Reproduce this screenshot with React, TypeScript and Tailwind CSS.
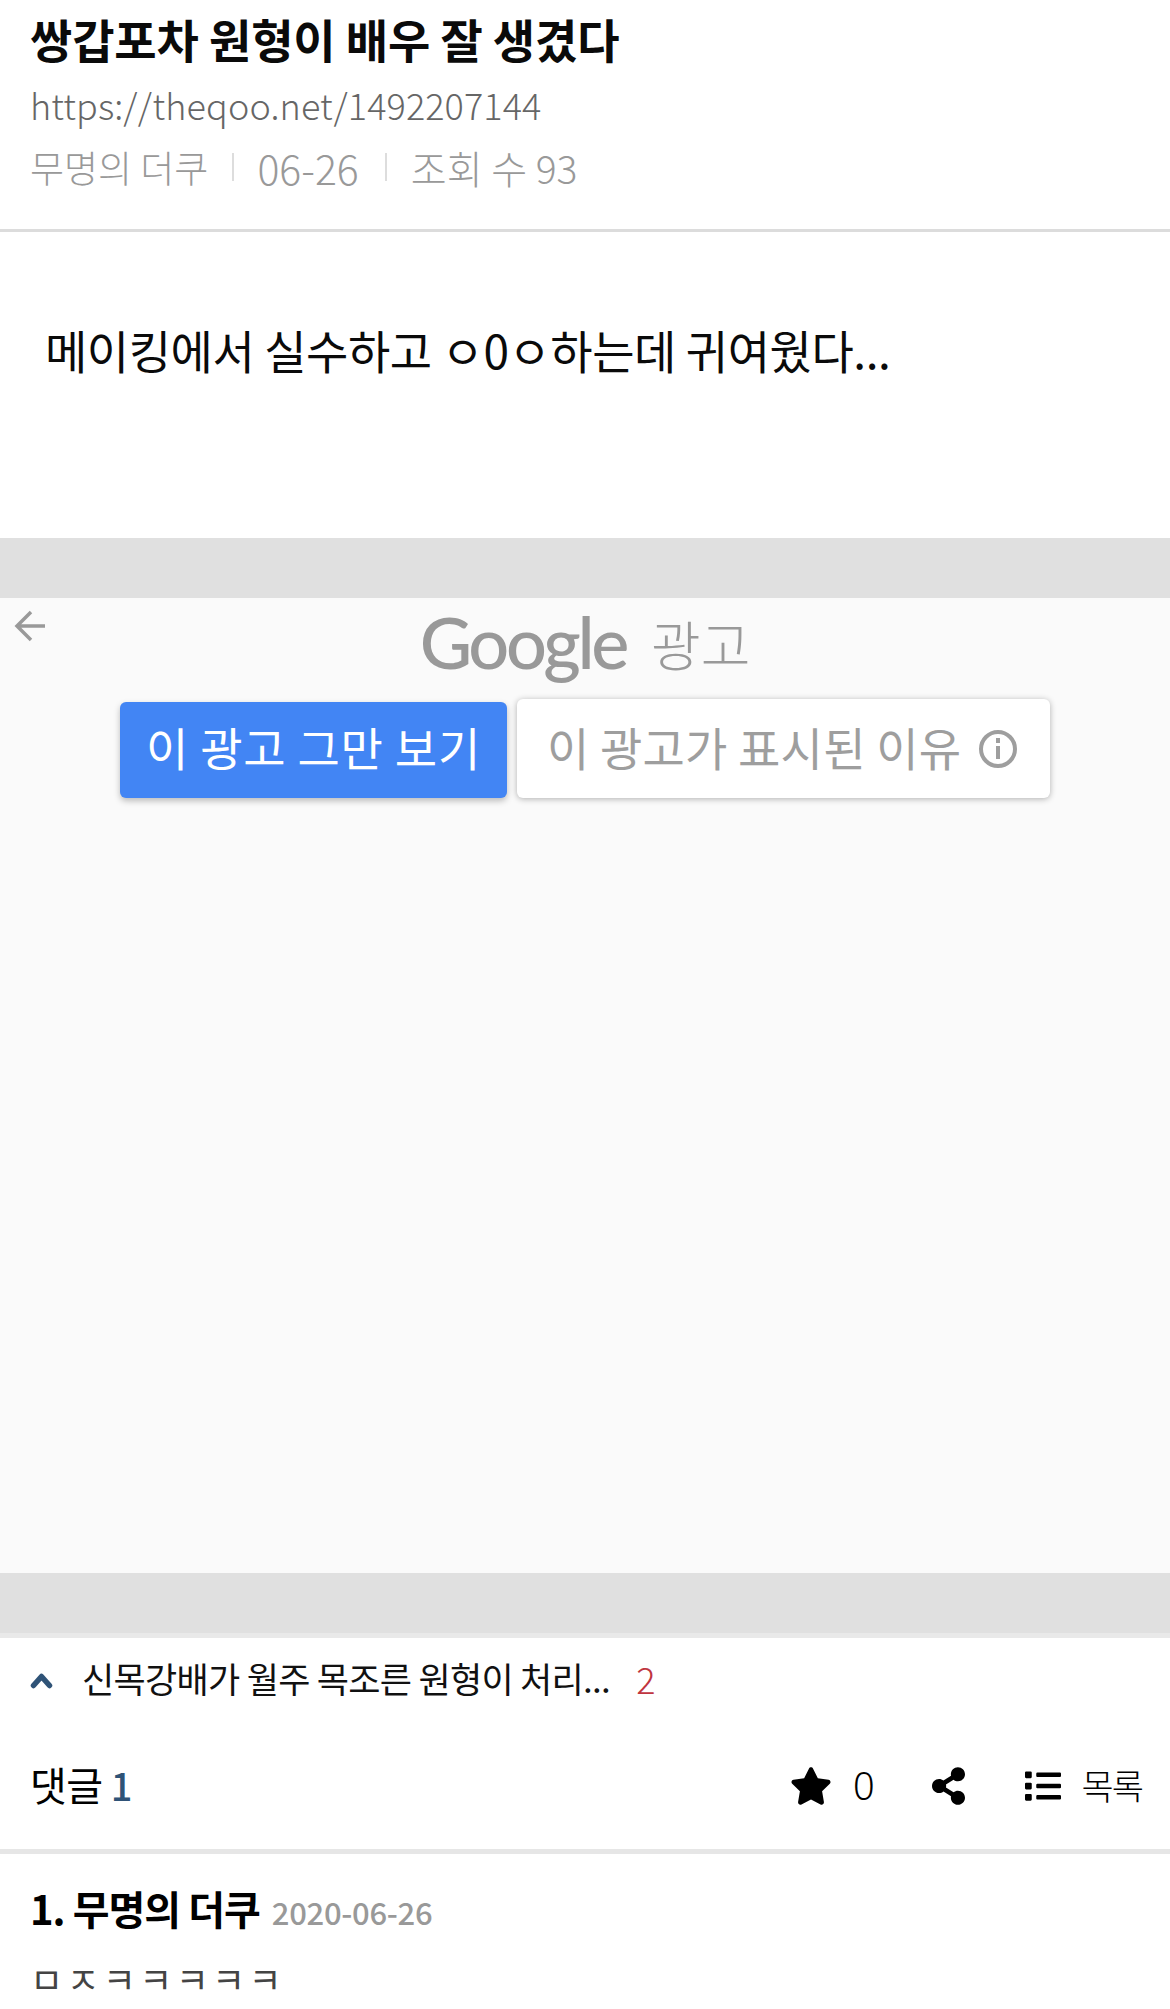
import React from "react";
import { FaStar, FaShareAlt, FaList } from "react-icons/fa";

export default function App() {
  return (
    <div className="w-[1170px] h-[2009px] overflow-hidden bg-white text-black font-['Noto_Sans_CJK_KR','Noto_Sans',sans-serif]">
      <header className="h-[232px] border-b-[3px] border-[#dcdcdc] px-[30px] pt-[6px]">
        <h1 className="text-[46px] leading-[64px] font-bold tracking-[-0.15px] whitespace-nowrap text-[#0a0a0a]">쌍갑포차 원형이 배우 잘 생겼다</h1>
        <p className="text-[36px] leading-[50px] mt-[9px] font-light tracking-[0.1px] text-[#666]">https://theqoo.net/1492207144</p>
        <div className="flex items-center mt-[13px] leading-[50px] font-light text-[#999]">
          <span className="text-[37px]">무명의 더쿠</span>
          <span className="w-[2px] h-[28px] bg-[#ddd] ml-[24px] mr-[23px]" />
          <span className="text-[41px]">06-26</span>
          <span className="w-[2px] h-[28px] bg-[#ddd] ml-[26px] mr-[24px]" />
          <span className="text-[39px]">조회 수 93</span>
        </div>
      </header>
      <div className="h-[306px] pl-[45px] pt-[85px] text-[46px] leading-[64px] font-normal tracking-[-0.45px] text-[#0a0a0a] whitespace-nowrap">
        메이킹에서 실수하고 ㅇ0ㅇ하는데 귀여웠다...
      </div>
      <div className="h-[60px] bg-[#e0e0e0]" />
      <section className="relative h-[975px] bg-[#fafafa] pt-[9px]">
        <svg className="absolute left-[13px] top-[12px]" width="34" height="32" viewBox="0 0 34 32" fill="none" stroke="#999" strokeWidth="3.5">
          <path d="M32 16H4M18 2L4 16l14 14" />
        </svg>
        <div className="flex items-center justify-center gap-[25px] h-[74px]">
          <span className="font-['Lato',sans-serif] text-[72px] leading-[74px] font-medium tracking-[-3.4px] text-[#999] mb-[6px]">Google</span>
          <span className="text-[54px] leading-[74px] font-light text-[#999] mb-[1px]">광고</span>
        </div>
        <div className="flex items-end pl-[120px] gap-[10px] mt-[18px]">
          <button className="w-[387px] h-[96px] rounded-[6px] bg-[#4285f4] text-white text-[46px] font-normal tracking-[0.8px] pb-[8px] shadow-[0_3px_6px_rgba(0,0,0,0.25)]">이 광고 그만 보기</button>
          <button className="w-[533px] h-[99px] rounded-[6px] bg-white text-[#9e9e9e] text-[46px] font-normal tracking-[0.2px] pb-[5px] pl-[30px] shadow-[0_1px_6px_rgba(0,0,0,0.3)] flex items-center justify-start gap-[17px]">
            <span>이 광고가 표시된 이유</span>
            <svg className="mt-[6px]" width="40" height="40" viewBox="0 0 40 40" fill="none" stroke="#9e9e9e" strokeWidth="4">
              <circle cx="20" cy="20" r="17" />
              <path d="M20 17v13M20 9v5" />
            </svg>
          </button>
        </div>
      </section>
      <div className="h-[65px] bg-[#e0e0e0] border-b-[5px] border-[#e9e9e9]" />
      <div className="flex items-center h-[84px] pl-[30px] pb-[4px] text-[35px] tracking-[-0.7px] font-normal text-[#111]">
        <svg className="mt-[4px]" width="23" height="17" viewBox="0 0 23 17" fill="none" stroke="#2f5377" strokeWidth="5.5" strokeLinecap="round" strokeLinejoin="round">
          <path d="M3.5 13.5L11.5 4.5l8 9" />
        </svg>
        <span className="ml-[29px] whitespace-nowrap">신목강배가 월주 목조른 원형이 처리...</span>
        <span className="ml-[26px] text-[#c0353f] text-[36px] font-light">2</span>
      </div>
      <div className="flex items-center justify-between h-[132px] pl-[30px] pr-[28px] border-b-[5px] border-[#e6e6e6]">
        <div className="text-[40px] leading-[60px] font-normal tracking-[-0.6px] mb-[3px]">댓글 <span className="text-[#2f5377] font-medium text-[38px]">1</span></div>
        <div className="flex items-center font-light">
          <FaStar className="w-[42px] h-[40px]" />
          <span className="ml-[21px] text-[38px] font-['Noto_Sans',sans-serif]">0</span>
          <FaShareAlt className="ml-[57px] w-[33px] h-[38px]" />
          <FaList className="ml-[59px] w-[38px] h-[36px]" />
          <span className="ml-[20px] text-[35px] tracking-[-2px]">목록</span>
        </div>
      </div>
      <div className="px-[30px] pt-[24px]">
        <div className="flex items-baseline">
          <span className="text-[40px] leading-[60px] font-bold tracking-[-1px]">1. 무명의 더쿠</span>
          <span className="ml-[12px] text-[31px] font-medium text-[#999] tracking-[-0.3px]">2020-06-26</span>
        </div>
        <p className="mt-[15px] text-[36px] leading-[50px] text-[#444] tracking-[3.3px]">ㅁㅈㅋㅋㅋㅋㅋ</p>
      </div>
    </div>
  );
}
